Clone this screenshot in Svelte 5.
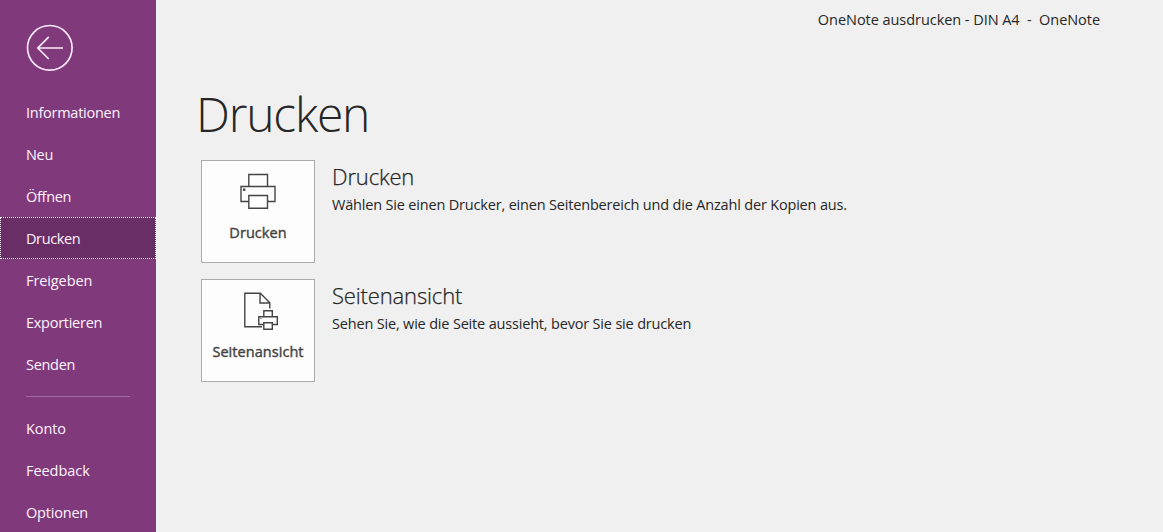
<script>
  let active = "Drucken";

  const mainItems = [
    { label: "Informationen", spacing: -0.26 },
    { label: "Neu", spacing: -0.3 },
    { label: "Öffnen", spacing: -0.3 },
    { label: "Drucken", spacing: -0.4 },
    { label: "Freigeben", spacing: -0.1 },
    { label: "Exportieren", spacing: -0.27 },
    { label: "Senden", spacing: -0.3 },
  ];
  const footerItems = [
    { label: "Konto", spacing: -0.1 },
    { label: "Feedback", spacing: -0.05 },
    { label: "Optionen", spacing: -0.2 },
  ];
</script>

{#snippet navItem(item)}
  <button
    class="item"
    class:active={item.label === active}
    on:click={() => (active = item.label)}
  >
    <span style="letter-spacing: {item.spacing}px">{item.label}</span>
  </button>
{/snippet}

<div class="backstage">
  <nav>
    <button class="back" aria-label="Zurück">
      <svg width="48" height="48" viewBox="0 0 48 48">
        <circle cx="23.8" cy="23.8" r="22.3" />
        <path d="M37 24H12.5M22.8 12.8L11.8 24L22.8 35" />
      </svg>
    </button>
    {#each mainItems as item}
      {@render navItem(item)}
    {/each}
    <hr />
    {#each footerItems as item}
      {@render navItem(item)}
    {/each}
  </nav>

  <main>
    <header>OneNote ausdrucken - DIN A4&nbsp; -&nbsp; OneNote</header>
    <h1>Drucken</h1>

    <section>
      <button class="tile">
        <svg width="38" height="38" viewBox="0 0 38 38">
          <path d="M9.8 13.5V1.5H28.5V13.5" />
          <path d="M9.8 28.5H2V13.5H36V28.5H28.5" />
          <path d="M9.8 22.5H28.5V35.2H9.8Z" />
          <rect class="dot" x="4" y="15.5" width="2.4" height="2.4" />
        </svg>
        <span class="caption">Drucken</span>
      </button>
      <div class="text">
        <h2>Drucken</h2>
        <p>Wählen Sie einen Drucker, einen Seitenbereich und die Anzahl der Kopien aus.</p>
      </div>
    </section>

    <section>
      <button class="tile">
        <svg width="38" height="38" viewBox="0 0 38 38">
          <path d="M23 34.8H5.8V1.3H21.3L30.8 10.8V16.5" />
          <path d="M21 1.3V11H30.8" />
          <path d="M24.8 24.8V18.8H33.3V24.8" />
          <path d="M24.8 32.5H19.8V24.8H38.3V32.5H33.3" />
          <path d="M24.8 30.8H33.3V37.2H24.8Z" />
          <rect class="dot" x="21.5" y="26" width="1" height="1" />
        </svg>
        <span class="caption">Seitenansicht</span>
      </button>
      <div class="text">
        <h2>Seitenansicht</h2>
        <p>Sehen Sie, wie die Seite aussieht, bevor Sie sie drucken</p>
      </div>
    </section>
  </main>
</div>

<style>
  :global(body) {
    overflow: hidden;
  }
  .backstage {
    display: flex;
    height: 100vh;
    overflow: hidden;
    background: #f0f0f0;
    color: #262626;
    font-family: "Open Sans", "Noto Sans", sans-serif;
    font-size: 14.5px;
  }
  button {
    font: inherit;
    padding: 0;
    border: none;
    background: none;
  }
  svg {
    display: block;
    fill: none;
    overflow: visible;
  }
  nav {
    width: 156px;
    flex: none;
    background: #80397b;
    color: #fff;
  }
  .back {
    display: block;
    margin: 24px 0 19px 26px;
    color: inherit;
  }
  .back svg {
    stroke: #fdeafd;
    stroke-width: 1.7;
  }
  .item {
    display: flex;
    align-items: center;
    box-sizing: border-box;
    width: 156px;
    height: 42px;
    padding: 1px 0 0 25px;
    border: 1px solid transparent;
    color: #fff4ff;
    text-align: left;
  }
  .item.active {
    background: #6a2e66;
    border: 1px dotted #fff;
  }
  hr {
    width: 104px;
    height: 1px;
    margin: 11px 0 10px 26px;
    border: none;
    background: #a066a0;
  }
  main {
    flex: 1;
    padding-left: 45px;
  }
  header {
    height: 40px;
    padding-right: 63px;
    line-height: 40px;
    text-align: right;
    letter-spacing: -0.05px;
  }
  h1 {
    height: 70px;
    margin: 39px 0 11px -5px;
    font-size: 48px;
    font-weight: 300;
    line-height: 70px;
    letter-spacing: -1.2px;
  }
  section {
    display: flex;
    gap: 17px;
    margin-bottom: 16px;
  }
  .tile {
    display: flex;
    flex-direction: column;
    align-items: center;
    box-sizing: border-box;
    width: 114px;
    height: 103px;
    padding-top: 12px;
    border: 1px solid #ababab;
    background: #fdfdfd;
    color: #444;
  }
  .tile svg {
    stroke: #444;
    stroke-width: 1.4;
  }
  .tile .dot {
    fill: #444;
    stroke: none;
  }
  .caption {
    margin-top: 12px;
    line-height: 20px;
    font-weight: 400;
    letter-spacing: 0.05px;
    -webkit-text-stroke: 0.4px #444;
  }
  h2 {
    margin: 1px 0 0;
    font-size: 22px;
    font-weight: 300;
    line-height: 30px;
    letter-spacing: -0.15px;
    -webkit-text-stroke: 0.25px #262626;
  }
  p {
    margin: 4px 0 0;
    line-height: 20px;
    letter-spacing: -0.18px;
  }
</style>
